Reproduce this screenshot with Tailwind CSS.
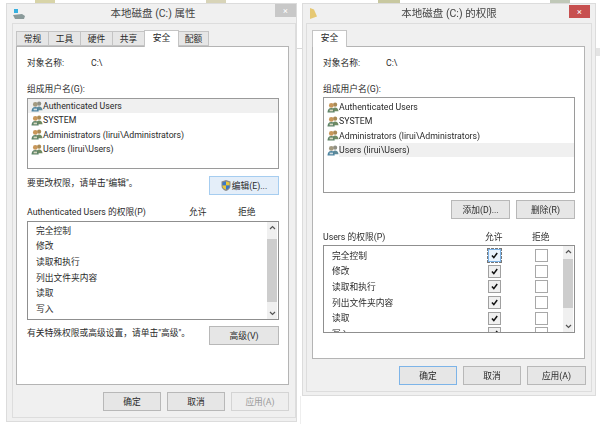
<!DOCTYPE html>
<html lang="zh-CN">
<head>
<meta charset="UTF-8">
<title>本地磁盘 (C:) 权限</title>
<script src="https://cdn.jsdelivr.net/npm/@tailwindcss/browser@4"></script>
</head>
<body class="relative w-[600px] h-[427px] overflow-hidden bg-white text-[8.75px] leading-[14px] text-[#2a2a2a] font-['Roboto','Noto_Sans_CJK_SC',sans-serif] blur-[0.35px]">

<svg class="hidden">
  <symbol id="users" viewBox="0 0 14 13">
    <circle cx="9.5" cy="3.200" r="2.500" fill="#a98a55"/>
    <path d="M6 11c0-3 1.500-4.500 3.500-4.500S13.500 8 13.500 11z" fill="#6f8a62"/>
    <circle cx="5" cy="4" r="2.800" fill="#c8975a"/>
    <path d="M.5 12.500c0-3.500 1.500-5.500 4.500-5.500s4 2 4 5.500z" fill="#5f8468"/>
    <path d="M3 9h4v2H3z" fill="#d8d8c0"/>
  </symbol>
  <symbol id="usersblue" viewBox="0 0 14 13">
    <circle cx="9.5" cy="3.200" r="2.500" fill="#8f8f84"/>
    <path d="M6 11c0-3 1.500-4.500 3.500-4.500S13.500 8 13.500 11z" fill="#5f8a98"/>
    <circle cx="5" cy="4" r="2.800" fill="#a39a80"/>
    <path d="M.5 12.500c0-3.500 1.500-5.500 4.500-5.500s4 2 4 5.500z" fill="#4d84a0"/>
    <path d="M3 9h4v2H3z" fill="#d0dce0"/>
  </symbol>
  <symbol id="check" viewBox="0 0 13 13">
    <path d="M3.500 6.500l2.200 2.500 4-5.500" fill="none" stroke="#111" stroke-width="1.800"/>
  </symbol>
</svg>

<!-- bits of the desktop behind the windows -->
<div class="absolute left-[35px] top-0 w-[20px] h-[3px] bg-[#d8d4a8]"></div>
<div class="absolute left-[206px] top-0 w-[20px] h-[3px] bg-[#d8d4b8]"></div>
<div class="absolute left-[378px] top-0 w-[22px] h-[3px] bg-[#c8c8a0]"></div>
<div class="absolute left-[550px] top-0 w-[20px] h-[3px] bg-[#c0c8b8]"></div>
<div class="absolute left-[297px] top-[48px] w-[5px] h-[1px] bg-[#d8d8d8]"></div>
<div class="absolute left-[596px] top-[48px] w-[4px] h-[8px] bg-[#e4e4e4]"></div>
<div class="absolute left-[300px] top-[396px] w-[1px] h-[28px] bg-[#eeeeee]"></div>

<!-- 属性 window -->
<div class="absolute left-[6px] top-[3px] w-[291px] h-[419px] flex flex-col border border-[#dcdcdc] bg-[#f0f0f0]">
  <div class="relative h-[19px] shrink-0 flex items-center justify-center text-[10.5px] text-[#444]">
    <svg class="absolute left-[6px] top-[4px] w-[12px] h-[12px]" viewBox="0 0 12 12">
      <rect x="1" y="1" width="4" height="4" fill="#35b0e0"/>
      <path d="M0 7l9-1 3 2-1 3H2z" fill="#8a9a9a"/>
    </svg>
    <span class="pl-[3px]">本地磁盘 (C:) 属性</span>
    <div class="absolute right-0 top-0 w-[21px] h-[13px] bg-[#c8c8c8] flex items-center justify-center text-white text-[9px]">×</div>
  </div>
  <div class="ml-[5px] mb-[3px] flex-1 flex flex-col border border-[#dddddd] px-[3px] pt-[6px]">
    <div class="flex items-end h-[17px] -mb-px relative z-10">
      <div class="w-[33px] h-[15px] mb-px border border-[#c4c4c4] bg-[#e6e6e6] flex items-center justify-center">常规</div>
      <div class="w-[33px] h-[15px] mb-px -ml-px border border-[#c4c4c4] bg-[#e6e6e6] flex items-center justify-center">工具</div>
      <div class="w-[33px] h-[15px] mb-px -ml-px border border-[#c4c4c4] bg-[#e6e6e6] flex items-center justify-center">硬件</div>
      <div class="w-[33px] h-[15px] mb-px -ml-px border border-[#c4c4c4] bg-[#e6e6e6] flex items-center justify-center">共享</div>
      <div class="w-[35px] h-[17px] -ml-px border border-b-0 border-[#c4c4c4] bg-white flex items-start justify-center">安全</div>
      <div class="w-[31px] h-[15px] mb-px -ml-px border border-[#c4c4c4] bg-[#e6e6e6] flex items-center justify-center">配额</div>
    </div>
    <div class="w-[273px] h-[339px] border border-[#b4b4b4] bg-white px-[10px] pt-[9px] flex flex-col">
      <div class="flex h-[14px]"><span class="w-[64px]">对象名称:</span><span>C:\</span></div>
      <div class="mt-[12px] h-[14px]">组成用户名(G):</div>
      <div class="mt-[2px] w-[252px] h-[71px] border border-[#9a9a9a]">
        <div class="h-[14.3px] flex items-center pl-[3px] bg-[#f0f0f0]"><svg class="w-[12px] h-[11px]"><use href="#usersblue"/></svg>Authenticated Users</div>
        <div class="h-[14.3px] flex items-center pl-[3px]"><svg class="w-[12px] h-[11px]"><use href="#users"/></svg>SYSTEM</div>
        <div class="h-[14.3px] flex items-center pl-[3px]"><svg class="w-[12px] h-[11px]"><use href="#users"/></svg>Administrators (lirui\Administrators)</div>
        <div class="h-[14.3px] flex items-center pl-[3px]"><svg class="w-[12px] h-[11px]"><use href="#users"/></svg>Users (lirui\Users)</div>
      </div>
      <div class="mt-[7px] flex justify-between w-[252px] h-[19px]">
        <span>要更改权限，请单击"编辑"。</span>
        <div class="w-[70px] h-[19px] border border-[#a6cdf0] bg-[#e4eef9] flex items-center justify-center gap-[1px]">
          <svg class="w-[10px] h-[11px]" viewBox="0 0 10 11">
            <path d="M5 0l4.500 1.500V6c0 2.500-2 4-4.500 5C2.500 10 .5 8.500.5 6V1.500z" fill="#8a8a8a"/>
            <path d="M5 1.500V5.500H1.500V2.500z" fill="#3a78c8"/>
            <path d="M5 1.500l3.500 1V5.500H5z" fill="#e8c83a"/>
            <path d="M1.500 5.500H5V9.500C3 9 1.500 8 1.500 6z" fill="#e8c83a"/>
            <path d="M5 5.500H8.500V6C8.500 8 7 9 5 9.500z" fill="#3a78c8"/>
          </svg>
          编辑(E)...
        </div>
      </div>
      <div class="mt-[10px] flex h-[14px]"><span class="w-[162px]">Authenticated Users 的权限(P)</span><span class="w-[49px]">允许</span><span>拒绝</span></div>
      <div class="mt-[2px] w-[252px] h-[99px] border border-[#8f8f8f] flex">
        <div class="flex-1 pt-[1px] pl-[8px]">
          <div class="h-[15.6px] flex items-center">完全控制</div>
          <div class="h-[15.6px] flex items-center">修改</div>
          <div class="h-[15.6px] flex items-center">读取和执行</div>
          <div class="h-[15.6px] flex items-center">列出文件夹内容</div>
          <div class="h-[15.6px] flex items-center">读取</div>
          <div class="h-[15.6px] flex items-center">写入</div>
        </div>
        <div class="w-[10px] mr-px bg-[#f0f0f0] flex flex-col items-center justify-between">
          <svg class="w-[7px] h-[12px] shrink-0" viewBox="0 0 7 12"><path d="M1 7l2.500-2.500L6 7" fill="none" stroke="#555" stroke-width="1.200"/></svg>
          <div class="w-full h-[63px] bg-[#cdcdcd]"></div>
          <svg class="w-[7px] h-[12px] shrink-0" viewBox="0 0 7 12"><path d="M1 5l2.500 2.500L6 5" fill="none" stroke="#555" stroke-width="1.200"/></svg>
        </div>
      </div>
      <div class="mt-[6px] flex justify-between w-[252px] h-[19px]">
        <span>有关特殊权限或高级设置，请单击"高级"。</span>
        <div class="w-[70px] h-[19px] border border-[#b8b8b8] bg-[#e6e6e6] flex items-center justify-center">高级(V)</div>
      </div>
    </div>
    <div class="flex justify-end gap-[6px] pt-[7px] pr-[3px]">
      <div class="w-[58px] h-[19px] border border-[#b8b8b8] bg-[#e6e6e6] flex items-center justify-center">确定</div>
      <div class="w-[58px] h-[19px] border border-[#b8b8b8] bg-[#e6e6e6] flex items-center justify-center">取消</div>
      <div class="w-[58px] h-[19px] border border-[#d4d4d4] bg-[#eeeeee] flex items-center justify-center text-[#9a9a9a]">应用(A)</div>
    </div>
  </div>
</div>

<!-- 权限 window -->
<div class="absolute left-[302px] top-[3px] w-[294px] h-[393px] flex flex-col border border-[#dcdcdc] bg-[#f0f0f0]">
  <div class="relative h-[19px] shrink-0 flex items-center justify-center text-[10.5px] text-[#444]">
    <svg class="absolute left-[6px] top-[3px] w-[9px] h-[13px]" viewBox="0 0 9 13">
      <path d="M1 1l4 1.500 3 7-7 2.500z" fill="#e6c873"/>
    </svg>
    <span>本地磁盘 (C:) 的权限</span>
    <div class="absolute right-[5px] top-[1px] w-[21px] h-[13px] bg-[#c75050] flex items-center justify-center text-white text-[9px]">×</div>
  </div>
  <div class="mx-[3px] mb-[3px] flex-1 flex flex-col border border-[#dddddd] px-[5px] pt-[6px]">
    <div class="flex items-end h-[17px] -mb-px relative z-10">
      <div class="w-[35px] h-[17px] border border-b-0 border-[#c4c4c4] bg-white flex items-start justify-center">安全</div>
    </div>
    <div class="w-[273px] h-[313px] border border-[#b4b4b4] bg-white px-[10px] pt-[9px] flex flex-col">
      <div class="flex h-[14px]"><span class="w-[63px]">对象名称:</span><span>C:\</span></div>
      <div class="mt-[12px] h-[14px]">组成用户名(G):</div>
      <div class="mt-px w-[252px] h-[96px] border border-[#9a9a9a] pt-[2px]">
        <div class="h-[14.3px] flex items-center pl-[3px]"><svg class="w-[12px] h-[11px]"><use href="#users"/></svg>Authenticated Users</div>
        <div class="h-[14.3px] flex items-center pl-[3px]"><svg class="w-[12px] h-[11px]"><use href="#users"/></svg>SYSTEM</div>
        <div class="h-[14.3px] flex items-center pl-[3px]"><svg class="w-[12px] h-[11px]"><use href="#users"/></svg>Administrators (lirui\Administrators)</div>
        <div class="h-[14.3px] flex items-center pl-[3px]"><svg class="w-[12px] h-[11px]"><use href="#usersblue"/></svg><span class="flex-1 h-full bg-[#f0f0f0] flex items-center">Users (lirui\Users)</span></div>
      </div>
      <div class="mt-[7px] flex justify-end gap-[6px] w-[252px]">
        <div class="w-[59px] h-[19px] border border-[#b8b8b8] bg-[#e6e6e6] flex items-center justify-center">添加(D)...</div>
        <div class="w-[59px] h-[19px] border border-[#b8b8b8] bg-[#e6e6e6] flex items-center justify-center">删除(R)</div>
      </div>
      <div class="mt-[11px] flex h-[14px]"><span class="w-[162px]">Users 的权限(P)</span><span class="w-[47px]">允许</span><span>拒绝</span></div>
      <div class="mt-px w-[252px] h-[88px] border border-[#8f8f8f] flex overflow-hidden">
        <div class="flex-1 pt-[2px] pl-[8px] overflow-hidden">
          <div class="h-[15.6px] flex items-center"><span class="w-[156px]">完全控制</span><span class="w-[13px] h-[13px] outline-1 outline-dashed outline-[#777] border border-[#7db4e8] bg-[#eaf3fc]"><svg class="w-[11px] h-[11px]"><use href="#check"/></svg></span><span class="ml-[34px] w-[13px] h-[13px] border border-[#a8a8a8]"></span></div>
          <div class="h-[15.6px] flex items-center"><span class="w-[156px]">修改</span><span class="w-[13px] h-[13px] border border-[#a0a0a0] bg-[#f0f0f0]"><svg class="w-[11px] h-[11px]"><use href="#check"/></svg></span><span class="ml-[34px] w-[13px] h-[13px] border border-[#a8a8a8]"></span></div>
          <div class="h-[15.6px] flex items-center"><span class="w-[156px]">读取和执行</span><span class="w-[13px] h-[13px] border border-[#a0a0a0] bg-[#f0f0f0]"><svg class="w-[11px] h-[11px]"><use href="#check"/></svg></span><span class="ml-[34px] w-[13px] h-[13px] border border-[#a8a8a8]"></span></div>
          <div class="h-[15.6px] flex items-center"><span class="w-[156px]">列出文件夹内容</span><span class="w-[13px] h-[13px] border border-[#a0a0a0] bg-[#f0f0f0]"><svg class="w-[11px] h-[11px]"><use href="#check"/></svg></span><span class="ml-[34px] w-[13px] h-[13px] border border-[#a8a8a8]"></span></div>
          <div class="h-[15.6px] flex items-center"><span class="w-[156px]">读取</span><span class="w-[13px] h-[13px] border border-[#a0a0a0] bg-[#f0f0f0]"><svg class="w-[11px] h-[11px]"><use href="#check"/></svg></span><span class="ml-[34px] w-[13px] h-[13px] border border-[#a8a8a8]"></span></div>
          <div class="h-[15.6px] flex items-center"><span class="w-[156px]">写入</span><span class="w-[13px] h-[13px] border border-[#a0a0a0] bg-[#f0f0f0]"><svg class="w-[11px] h-[11px]"><use href="#check"/></svg></span><span class="ml-[34px] w-[13px] h-[13px] border border-[#a8a8a8]"></span></div>
        </div>
        <div class="w-[10px] mr-px bg-[#f0f0f0] flex flex-col items-center justify-between">
          <svg class="w-[7px] h-[12px] shrink-0" viewBox="0 0 7 12"><path d="M1 7l2.500-2.500L6 7" fill="none" stroke="#555" stroke-width="1.200"/></svg>
          <div class="w-full h-[49px] bg-[#cdcdcd] mb-[12px]"></div>
          <svg class="w-[7px] h-[12px] shrink-0" viewBox="0 0 7 12"><path d="M1 5l2.500 2.500L6 5" fill="none" stroke="#555" stroke-width="1.200"/></svg>
        </div>
      </div>
    </div>
    <div class="flex justify-end gap-[6px] pt-[7px]">
      <div class="w-[58px] h-[19px] border border-[#7db4e8] bg-[#e6e6e6] flex items-center justify-center">确定</div>
      <div class="w-[58px] h-[19px] border border-[#b8b8b8] bg-[#e6e6e6] flex items-center justify-center">取消</div>
      <div class="w-[59px] h-[19px] border border-[#b8b8b8] bg-[#e6e6e6] flex items-center justify-center">应用(A)</div>
    </div>
  </div>
</div>

</body>
</html>
